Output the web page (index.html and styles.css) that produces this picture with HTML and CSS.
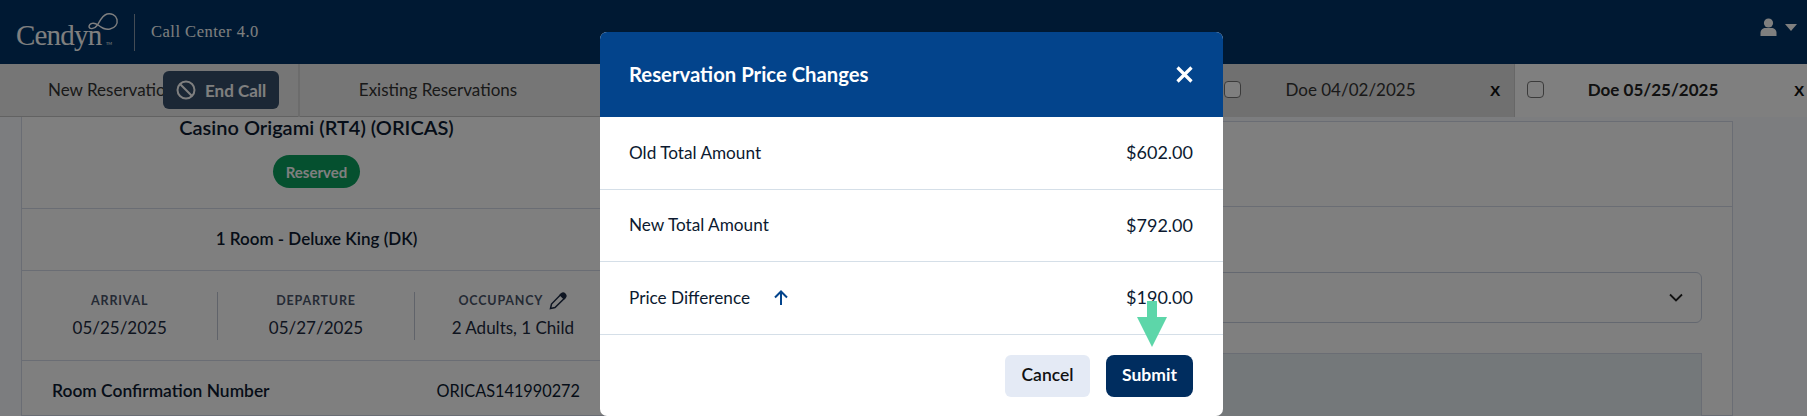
FILE: index.html
```html
<!DOCTYPE html>
<html lang="en">
<head>
<meta charset="utf-8">
<title>Call Center 4.0</title>
<link rel="stylesheet" href="styles.css">
</head>
<body>
<div class="page">
  <header class="topbar">
    <div class="logo">
      <span class="logo-word">Cendyn</span>
      <svg class="logo-loop" width="32" height="20" viewBox="0 0 32 20" fill="none" stroke="#fff" stroke-width="1.4"><path d="M2 15C2 11 7 10 11 13C15 16 18 18 23 17C28 16 31 12 30 7.5C29 3 24 1 20 2C15 3.5 13 9 10.500 13C8 16.500 3 18 2 15Z"/></svg>
      <span class="logo-tm">TM</span>
    </div>
    <span class="topbar-divider"></span>
    <span class="app-name">Call Center 4.0</span>
    <div class="user-menu">
      <svg width="17" height="18" viewBox="0 0 17 18" fill="#fff"><circle cx="8.500" cy="5" r="4.600"/><path d="M0.500 18V15C0.500 11.500 3 10 5.500 10H11.500C14 10 16.500 11.500 16.500 15V18Z"/></svg>
      <svg width="12" height="7" viewBox="0 0 12 7" fill="#fff"><path d="M0 0H12L6 7Z"/></svg>
    </div>
  </header>

  <nav class="tabs">
    <div class="tab tab-new">New Reservation</div>
    <div class="tab tab-existing">Existing Reservations</div>
    <div class="tab-fill"></div>
    <div class="tab tab-doe">
      <span class="check"></span><span class="tab-label">Doe 04/02/2025</span><span class="tab-x">X</span>
    </div>
    <div class="tab tab-doe tab-active">
      <span class="check"></span><span class="tab-label">Doe 05/25/2025</span><span class="tab-x">X</span>
    </div>
  </nav>

  <main class="content">
    <section class="left-card">
      <div class="hotel">
        <h2 class="hotel-name">Casino Origami (RT4) (ORICAS)</h2>
        <span class="pill">Reserved</span>
      </div>
      <div class="room-line">1 Room - Deluxe King (DK)</div>
      <div class="dates">
        <div class="date-col"><span class="date-label">ARRIVAL</span><span class="date-value">05/25/2025</span></div>
        <div class="date-col"><span class="date-label">DEPARTURE</span><span class="date-value">05/27/2025</span></div>
        <div class="date-col">
          <span class="date-label">OCCUPANCY
            <svg class="pen" width="18" height="18" viewBox="0 0 18 18" fill="none" stroke="#1d2b44" stroke-width="1.500"><path d="M1.500 16.500L2.500 12L11.800 2.500L15.500 6.200L6 15.500Z"/><path d="M12.500 1.800C13.500 .8 14.800 .8 16 2C17.200 3.200 17.200 4.500 16.200 5.500L15 6.700L11.300 3Z" fill="#1d2b44"/></svg>
          </span>
          <span class="date-value">2 Adults, 1 Child</span>
        </div>
      </div>
      <div class="confirm-row"><strong class="confirm-label">Room Confirmation Number</strong><span class="confirm-value">ORICAS141990272</span></div>
    </section>
    <section class="right-card">
      <div class="right-head"></div>
      <div class="right-body">
        <div class="select">
          <svg width="14" height="9" viewBox="0 0 14 9" fill="none" stroke="#222" stroke-width="1.800"><path d="M1 1.500L7 7.500L13 1.500"/></svg>
        </div>
        <div class="info-box"></div>
      </div>
    </section>
  </main>

  <button class="end-call" type="button">
    <svg width="20" height="20" viewBox="0 0 20 20" fill="none" stroke="#fff" stroke-width="2"><circle cx="10" cy="10" r="8.500"/><path d="M4 4L16 16"/></svg>
    End Call
  </button>

  <div class="overlay"></div>

  <div class="modal">
    <div class="modal-head">
      <h1 class="modal-title">Reservation Price Changes</h1>
      <svg width="17" height="17" viewBox="0 0 17 17" fill="none" stroke="#fff" stroke-width="3.200"><path d="M1.500 1.500L15.500 15.500M15.500 1.500L1.500 15.500"/></svg>
    </div>
    <div class="modal-row"><span>Old Total Amount</span><span class="amount">$602.00</span></div>
    <div class="modal-row"><span>New Total Amount</span><span class="amount">$792.00</span></div>
    <div class="modal-row">
      <span class="diff">Price Difference
        <svg width="14" height="15" viewBox="0 0 14 15" fill="none" stroke="#03448c" stroke-width="2"><path d="M7 15V1.500M1 7.500L7 1.500L13 7.500"/></svg>
      </span>
      <span class="amount">$190.00</span>
    </div>
    <div class="modal-foot">
      <button class="btn btn-cancel" type="button">Cancel</button>
      <button class="btn btn-submit" type="button">Submit</button>
    </div>
  </div>

  <svg class="callout" width="30" height="46" viewBox="0 0 30 46" fill="#5dd6a9"><path d="M10 0H20V16H30L15 46L0 16H10Z"/></svg>
</div>
</body>
</html>
```
FILE: styles.css
```css
* { box-sizing: border-box; }
html, body { margin: 0; padding: 0; }
body {
  font-family: "Lato", "Liberation Sans", sans-serif;
  color: #0c1a30;
  background: #f8fafe;
}
.page {
  position: relative;
  width: 1807px;
  height: 416px;
  overflow: hidden;
}

/* top bar */
.topbar {
  height: 64px;
  background: #003366;
  display: flex;
  align-items: center;
  color: #fff;
  padding: 0 10px 0 16px;
}
.logo {
  position: relative;
  width: 118px;
  height: 40px;
  display: flex;
  align-items: center;
}
.logo-word {
  font-family: "Liberation Serif", serif;
  font-size: 29px;
  letter-spacing: -0.8px;
  margin-top: 6px;
}
.logo-loop { position: absolute; left: 71px; top: 0; }
.logo-tm {
  position: absolute;
  left: 90px;
  top: 29px;
  font-size: 4px;
}
.topbar-divider {
  width: 1px;
  height: 37px;
  background: #8899aa;
  margin-right: 16px;
}
.app-name {
  font-family: "Liberation Serif", serif;
  font-size: 16.500px;
  letter-spacing: 0.5px;
}
.user-menu {
  margin-left: auto;
  display: flex;
  align-items: center;
  gap: 8px;
  margin-top: -10px;
}

/* tabs */
.tabs {
  height: 53px;
  display: flex;
  background: #ececec;
  border-bottom: 1px solid #c4c4c4;
  font-size: 17px;
  color: #333;
}
.tab {
  height: 53px;
  display: flex;
  align-items: center;
  justify-content: center;
  flex: none;
  padding-bottom: 2px;
}
.tab-new {
  width: 300px;
  border-right: 2px solid #d8d8d8;
  justify-content: flex-start;
  padding-left: 48px;
}
.tab-existing { width: 276px; }
.tab-fill { flex: 1 1 0; }
.tab-doe {
  width: 300px;
  background: #e0e0e0;
  border-right: 1px solid #cfcfcf;
  padding: 0 12px 2px 9px;
  justify-content: flex-start;
}
.tab-active {
  background: #fff;
  border: 0;
  margin-right: -8px;
  padding: 0 9px 2px 12px;
  color: #222;
  font-weight: 700;
}
.check {
  width: 17px;
  height: 17px;
  border: 1px solid #777;
  border-radius: 4px;
  background: #fff;
  flex: none;
}
.tab-label { flex: 1; text-align: center; padding-right: 30px; }
.tab-active .tab-label { padding-right: 32px; }
.tab-x {
  font-family: "Liberation Sans", sans-serif;
  font-weight: 700;
  font-size: 15.500px;
  color: #111;
  width: 12px;
  margin-top: 3px;
}

/* background cards */
.content {
  height: 299px;
  display: flex;
  padding: 0 74px 0 21px;
  gap: 6px;
}
.left-card {
  width: 591px;
  flex: none;
  background: #fff;
  border: 1px solid #d5dbe8;
  border-top: 0;
}
.hotel {
  height: 92px;
  display: flex;
  flex-direction: column;
  align-items: center;
  border-bottom: 1px solid #d5dbe8;
}
.hotel-name {
  margin: 0;
  height: 38px;
  line-height: 20px;
  font-size: 20px;
  font-weight: 600;
}
.pill {
  width: 87px;
  height: 33px;
  border-radius: 17px;
  background: #0aa05f;
  color: #fff;
  font-size: 15px;
  font-weight: 700;
  display: flex;
  align-items: center;
  justify-content: center;
}
.room-line {
  height: 62px;
  border-bottom: 1px solid #d5dbe8;
  display: flex;
  align-items: center;
  justify-content: center;
  font-size: 17px;
  font-weight: 600;
  padding-bottom: 2px;
}
.dates {
  height: 90px;
  display: flex;
  align-items: center;
  border-bottom: 1px solid #d5dbe8;
}
.date-col {
  width: 196.500px;
  height: 48px;
  display: flex;
  flex-direction: column;
  align-items: center;
  gap: 7px;
  border-right: 1px solid #c0c6d4;
}
.date-col:last-child { border-right: 0; }
.date-label {
  display: flex;
  align-items: center;
  gap: 6px;
  height: 18px;
  font-size: 12.500px;
  font-weight: 700;
  letter-spacing: 0.8px;
  color: #4a556a;
}
.date-value { font-size: 17px; color: #1c2a40; }
.pen { flex: none; }
.confirm-row {
  height: 58px;
  display: flex;
  justify-content: space-between;
  align-items: center;
  padding: 0 31px 0 30px;
  font-size: 16.300px;
}
.confirm-label { font-weight: 600; font-size: 17.400px; }

.right-card {
  flex: 1;
  margin-top: 4px;
  background: #fff;
  border: 1px solid #d5dbe8;
}
.right-head { height: 85px; border-bottom: 1px solid #d5dbe8; }
.right-body { padding: 65px 30px 0; }
.select {
  height: 51px;
  border: 1px solid #c8d0e0;
  border-radius: 6px;
  display: flex;
  align-items: center;
  justify-content: flex-end;
  padding-right: 18px;
}
.info-box {
  margin-top: 30px;
  height: 80px;
  background: #e8f0f4;
  border: 1px solid #d5dbe8;
}

/* end call floats over the tabs */
.end-call {
  position: absolute;
  left: 163px;
  top: 71px;
  width: 116px;
  height: 38px;
  border: 0;
  border-radius: 6px;
  background: #364f6a;
  color: #fff;
  font: 700 17px "Lato", sans-serif;
  display: flex;
  align-items: center;
  gap: 9px;
  padding: 0 0 0 13px;
}

.overlay {
  position: absolute;
  inset: 0;
  background: rgba(0, 0, 0, 0.5);
}

/* modal */
.modal {
  position: absolute;
  left: 600px;
  top: 32px;
  width: 623px;
  height: 384px;
  background: #fff;
  border-radius: 7px;
  overflow: hidden;
  font-size: 17.200px;
  color: #0c1a30;
}
.modal-head {
  height: 85px;
  background: #03448c;
  display: flex;
  align-items: center;
  justify-content: space-between;
  padding: 0 30px 1px 30px;
  color: #fff;
}
.modal-title { margin: 0 0 1px -1px; font-size: 20.300px; font-weight: 700; }
.modal-row {
  height: 72.500px;
  display: flex;
  align-items: center;
  justify-content: space-between;
  padding: 0 30px 1px 29px;
  border-bottom: 1px solid #d5dfe8;
}
.amount { font-size: 18px; }
.diff { display: flex; align-items: center; gap: 24px; }
.modal-foot {
  display: flex;
  justify-content: flex-end;
  gap: 16px;
  padding: 20px 30px 0;
}
.btn {
  height: 42px;
  border: 0;
  padding: 0 0 2px;
  font: 700 17.500px "Lato", sans-serif;
}
.btn-cancel { width: 85px; background: #e4eaf5; color: #111; border-radius: 6px; font-weight: 600; }
.btn-submit { width: 87px; background: #002d5f; color: #fff; border-radius: 8px; }

.callout {
  position: absolute;
  left: 1137px;
  top: 301px;
}
```
